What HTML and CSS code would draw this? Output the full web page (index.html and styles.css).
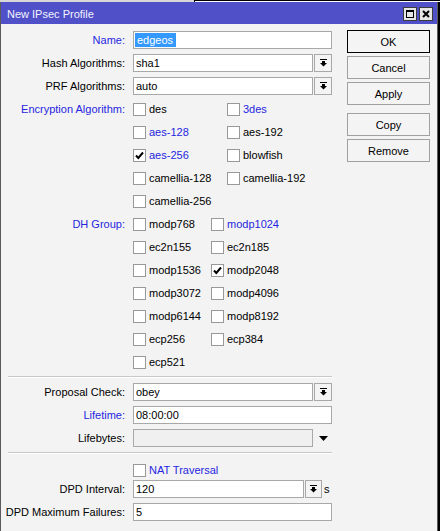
FILE: index.html
```html
<!DOCTYPE html>
<html lang="en">
<head>
    <meta charset="UTF-8">
    <title>New IPsec Profile</title>
    <link rel="stylesheet" href="styles.css">
</head>
<body>
<div class="screen">
    <div class="backdrop">
        <span class="backdrop__left"></span>
        <span class="backdrop__right"></span>
    </div>

    <div class="window">
        <div class="window__title">
            <span class="window__caption">New IPsec Profile</span>
            <span class="window__ctrls">
                <span class="ctrl">
                    <svg width="8" height="8" viewBox="0 0 8 8"><rect x="0.5" y="0.5" width="7" height="7" fill="none" stroke="#000"/><rect x="0" y="0" width="8" height="2" fill="#000"/></svg>
                </span>
                <span class="ctrl">
                    <svg width="8" height="8" viewBox="0 0 8 8"><path d="M1 1 L7 7 M7 1 L1 7" stroke="#000" stroke-width="2"/></svg>
                </span>
            </span>
        </div>

        <div class="window__body">
            <div class="form">
                <div class="row">
                    <div class="row__label row__label_blue">Name:</div>
                    <div class="row__value">
                        <div class="field"><span class="field__sel">edgeos</span></div>
                    </div>
                </div>
                <div class="row">
                    <div class="row__label">Hash Algorithms:</div>
                    <div class="row__value">
                        <div class="field field_select">sha1</div>
                        <span class="drop"><svg width="7" height="8" viewBox="0 0 7 8"><rect x="0" y="0" width="7" height="1" fill="#000"/><rect x="2" y="2" width="3" height="2" fill="#000"/><path d="M0 4 H7 L3.5 7.5 Z" fill="#000"/></svg></span>
                    </div>
                </div>
                <div class="row">
                    <div class="row__label">PRF Algorithms:</div>
                    <div class="row__value">
                        <div class="field field_select">auto</div>
                        <span class="drop"><svg width="7" height="8" viewBox="0 0 7 8"><rect x="0" y="0" width="7" height="1" fill="#000"/><rect x="2" y="2" width="3" height="2" fill="#000"/><path d="M0 4 H7 L3.5 7.5 Z" fill="#000"/></svg></span>
                    </div>
                </div>

                <div class="row row_group">
                    <div class="row__label row__label_blue">Encryption Algorithm:</div>
                    <div class="checks checks_enc">
                        <label class="check"><span class="check__box"></span>des</label>
                        <label class="check check_blue"><span class="check__box"></span>3des</label>
                        <label class="check check_blue"><span class="check__box"></span>aes-128</label>
                        <label class="check"><span class="check__box"></span>aes-192</label>
                        <label class="check check_blue"><span class="check__box"><svg width="9" height="9" viewBox="0 0 9 9"><path d="M1 4.5 L3.3 7 L8 1.5" fill="none" stroke="#000" stroke-width="2"/></svg></span>aes-256</label>
                        <label class="check"><span class="check__box"></span>blowfish</label>
                        <label class="check"><span class="check__box"></span>camellia-128</label>
                        <label class="check"><span class="check__box"></span>camellia-192</label>
                        <label class="check"><span class="check__box"></span>camellia-256</label>
                    </div>
                </div>

                <div class="row row_group">
                    <div class="row__label row__label_blue">DH Group:</div>
                    <div class="checks checks_dh">
                        <label class="check"><span class="check__box"></span>modp768</label>
                        <label class="check check_blue"><span class="check__box"></span>modp1024</label>
                        <label class="check"><span class="check__box"></span>ec2n155</label>
                        <label class="check"><span class="check__box"></span>ec2n185</label>
                        <label class="check"><span class="check__box"></span>modp1536</label>
                        <label class="check"><span class="check__box"><svg width="9" height="9" viewBox="0 0 9 9"><path d="M1 4.5 L3.3 7 L8 1.5" fill="none" stroke="#000" stroke-width="2"/></svg></span>modp2048</label>
                        <label class="check"><span class="check__box"></span>modp3072</label>
                        <label class="check"><span class="check__box"></span>modp4096</label>
                        <label class="check"><span class="check__box"></span>modp6144</label>
                        <label class="check"><span class="check__box"></span>modp8192</label>
                        <label class="check"><span class="check__box"></span>ecp256</label>
                        <label class="check"><span class="check__box"></span>ecp384</label>
                        <label class="check"><span class="check__box"></span>ecp521</label>
                    </div>
                </div>

                <div class="sep"></div>

                <div class="row">
                    <div class="row__label">Proposal Check:</div>
                    <div class="row__value">
                        <div class="field field_select">obey</div>
                        <span class="drop"><svg width="7" height="8" viewBox="0 0 7 8"><rect x="0" y="0" width="7" height="1" fill="#000"/><rect x="2" y="2" width="3" height="2" fill="#000"/><path d="M0 4 H7 L3.5 7.5 Z" fill="#000"/></svg></span>
                    </div>
                </div>
                <div class="row">
                    <div class="row__label row__label_blue">Lifetime:</div>
                    <div class="row__value">
                        <div class="field">08:00:00</div>
                    </div>
                </div>
                <div class="row">
                    <div class="row__label">Lifebytes:</div>
                    <div class="row__value">
                        <div class="field field_select field_off"></div>
                        <span class="drop drop_flat"><svg width="9" height="5" viewBox="0 0 9 5"><path d="M0 0 H9 L4.5 5 Z" fill="#000"/></svg></span>
                    </div>
                </div>

                <div class="sep sep_last"></div>

                <div class="row row_nat">
                    <div class="row__label"></div>
                    <div class="row__value">
                        <label class="check check_blue"><span class="check__box"></span>NAT Traversal</label>
                    </div>
                </div>
                <div class="row">
                    <div class="row__label">DPD Interval:</div>
                    <div class="row__value">
                        <div class="field field_short">120</div>
                        <span class="drop drop_short"><svg width="7" height="8" viewBox="0 0 7 8"><rect x="0" y="0" width="7" height="1" fill="#000"/><rect x="2" y="2" width="3" height="2" fill="#000"/><path d="M0 4 H7 L3.5 7.5 Z" fill="#000"/></svg></span>
                        <span class="unit">s</span>
                    </div>
                </div>
                <div class="row">
                    <div class="row__label">DPD Maximum Failures:</div>
                    <div class="row__value">
                        <div class="field">5</div>
                    </div>
                </div>
            </div>

            <div class="actions">
                <button class="btn btn_default">OK</button>
                <button class="btn">Cancel</button>
                <button class="btn">Apply</button>
                <button class="btn btn_gap">Copy</button>
                <button class="btn">Remove</button>
            </div>
        </div>
    </div>
</div>
</body>
</html>
```

FILE: styles.css
```css
* {
    box-sizing: border-box;
}
body {
    margin: 0;
    background: #000;
    color: #000;
    font: 11px "Liberation Sans", Arial, sans-serif;
}
.screen {
    width: 440px;
    height: 531px;
    overflow: hidden;
}
.backdrop {
    display: flex;
    height: 2px;
}
.backdrop__left {
    width: 195px;
    background: #d8d8d8;
    border-right: 1px solid #000;
}
.backdrop__right {
    flex: 1;
    background: #fff;
    border-top: 1px solid #000;
}
.window {
    width: 438px;
    height: 529px;
    background: #f3f3f3;
    border-left: 1px solid #5b5b5b;
    border-right: 1px solid #5b5b5b;
}
.window__title {
    display: flex;
    align-items: center;
    justify-content: space-between;
    height: 22px;
    padding: 2px 4px 0 6px;
    background: #5050c8;
    color: #f4f4ff;
}
.window__ctrls {
    display: flex;
    gap: 2px;
}
.ctrl {
    display: flex;
    align-items: center;
    justify-content: center;
    width: 14px;
    height: 14px;
    background: #e6e6e6;
    border: 1px solid #3c3c3c;
}
.window__body {
    display: flex;
    padding-top: 7px;
}
.form {
    width: 331px;
}
.row {
    display: flex;
    align-items: center;
    height: 18px;
    margin-bottom: 5px;
}
.row__label {
    flex: none;
    width: 124px;
    text-align: right;
    white-space: nowrap;
}
.row__label_blue {
    color: #2626e0;
}
.row__value {
    display: flex;
    align-items: center;
    margin-left: 8px;
}
.row_group {
    align-items: flex-start;
    height: auto;
}
.row_group .row__label {
    line-height: 18px;
}
.row_nat {
    height: 16px;
    margin-bottom: 2px;
}
.field {
    width: 199px;
    height: 18px;
    padding: 0 2px;
    line-height: 16px;
    white-space: nowrap;
    background: #fff;
    border: 1px solid #a8a8a8;
}
.field_select {
    width: 180px;
}
.field_short {
    width: 171px;
}
.field_off {
    background: #f0f0f0;
}
.field__sel {
    display: inline-block;
    margin-left: -1px;
    padding: 0 3px 0 2px;
    line-height: 14px;
    background: #3399ff;
    color: #fff;
}
.drop {
    display: flex;
    align-items: center;
    justify-content: center;
    width: 18px;
    height: 18px;
    margin-left: 1px;
    background: #f4f4f4;
    border: 1px solid #a8a8a8;
}
.drop_short {
    width: 17px;
}
.drop_flat {
    background: none;
    border-color: transparent;
}
.unit {
    margin-left: 2px;
}
.checks {
    display: grid;
    grid-auto-rows: 18px;
    row-gap: 5px;
    margin-left: 8px;
}
.checks_enc {
    grid-template-columns: 94px auto;
}
.checks_dh {
    grid-template-columns: 78px auto;
}
.check {
    display: flex;
    align-items: center;
    white-space: nowrap;
}
.check_blue {
    color: #2626e0;
}
.check__box {
    display: flex;
    align-items: center;
    justify-content: center;
    width: 13px;
    height: 13px;
    margin-right: 3px;
    background: #fff;
    border: 1px solid #999;
}
.sep {
    width: 324px;
    height: 2px;
    margin: 1px 0 5px 7px;
    border-top: 1px solid #c8c8c8;
    border-bottom: 1px solid #fff;
}
.sep_last {
    margin-bottom: 8px;
}
.actions {
    display: flex;
    flex-direction: column;
    gap: 3px;
    width: 83px;
    margin: -1px 0 0 15px;
}
.btn {
    display: block;
    width: 83px;
    height: 23px;
    padding: 0;
    color: #000;
    font: inherit;
    background: #f4f4f4;
    border: 1px solid #a0a0a0;
}
.btn_default {
    border-color: #000;
}
.btn_gap {
    margin-top: 5px;
}
```
